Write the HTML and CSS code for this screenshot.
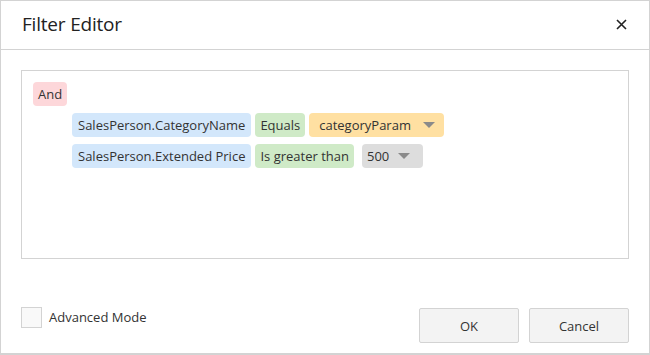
FILE: index.html
```html
<!DOCTYPE html>
<html>
<head>
<meta charset="utf-8">
<link rel="stylesheet" href="styles.css">
</head>
<body>
<div class="dialog">
  <div class="header">
    <span class="title">Filter Editor</span>
    <span class="close">
      <svg width="11" height="11" viewBox="0 0 11 11"><path d="M1 1 L10 10 M10 1 L1 10" stroke="#222" stroke-width="1.6" fill="none"/></svg>
    </span>
  </div>
  <div class="content">
    <div class="panel">
      <div class="group-row"><span class="chip chip-and">And</span></div>
      <div class="cond-row">
        <span class="chip chip-field">SalesPerson.CategoryName</span>
        <span class="chip chip-op">Equals</span>
        <span class="chip chip-param">categoryParam<span class="caret"></span></span>
      </div>
      <div class="cond-row">
        <span class="chip chip-field">SalesPerson.Extended Price</span>
        <span class="chip chip-op">Is greater than</span>
        <span class="chip chip-value">500<span class="caret"></span></span>
      </div>
    </div>
  </div>
  <div class="footer">
    <label class="check"><span class="box"></span><span class="check-label">Advanced Mode</span></label>
    <div class="buttons">
      <button class="btn">OK</button>
      <button class="btn">Cancel</button>
    </div>
  </div>
</div>
</body>
</html>
```

FILE: styles.css
```css
html, body {
  margin: 0;
  padding: 0;
  background: #fff;
}
body {
  font-family: "Open Sans", "Noto Sans", sans-serif;
  color: #333;
}
.dialog {
  width: 650px;
  height: 355px;
  box-sizing: border-box;
  border: 1px solid #d3d3d3;
  border-bottom-width: 2px;
  display: flex;
  flex-direction: column;
}
.header {
  height: 48px;
  border-bottom: 1px solid #d3d3d3;
  display: flex;
  align-items: center;
  justify-content: space-between;
  padding: 0 21px 0 21px;
}
.title {
  font-size: 19px;
  color: #222;
  letter-spacing: -0.2px;
  margin-top: -2px;
}
.close {
  display: flex;
  margin-top: -1px;
  margin-right: 1px;
}
.content {
  padding: 20px 20px 0;
}
.panel {
  height: 189px;
  box-sizing: border-box;
  border: 1px solid #d3d3d3;
  padding: 11px 11px;
  display: flex;
  flex-direction: column;
  gap: 7px;
}
.group-row, .cond-row {
  display: flex;
  gap: 4px;
}
.cond-row {
  padding-left: 39px;
}
.chip {
  height: 24px;
  box-sizing: border-box;
  padding: 0 5px;
  border-radius: 4px;
  font-size: 13px;
  line-height: 24px;
  color: #333;
  display: inline-flex;
  align-items: center;
  white-space: nowrap;
}
.chip-and { background: #fdd7da; }
.chip-field { background: #d3e7fb; padding: 0 6px; }
.chip-op { background: #cfeac7; }
.chip-param { background: #ffe0a2; margin-left: 0; padding: 0 9px 0 10px; }
.chip-value { background: #dddddd; margin-left: 4px; padding: 0 13px 0 5px; }
.caret {
  width: 0;
  height: 0;
  border-left: 6px solid transparent;
  border-right: 6px solid transparent;
  border-top: 6px solid #8a8a8a;
  margin-left: 12px;
}
.chip-value .caret { margin-left: 9px; }
.footer {
  margin-top: 48px;
  padding: 0 20px 0 20px;
  display: flex;
  justify-content: space-between;
  align-items: flex-start;
}
.check {
  display: flex;
  align-items: flex-start;
  gap: 7px;
}
.box {
  width: 21px;
  height: 21px;
  box-sizing: border-box;
  border: 1px solid #d3d3d3;
  background: #f9f9f9;
}
.check-label {
  font-size: 13px;
  color: #333;
  line-height: 20px;
}
.buttons {
  display: flex;
  gap: 10px;
  margin-top: 1px;
}
.btn {
  width: 100px;
  height: 35px;
  box-sizing: border-box;
  border: 1px solid #d3d3d3;
  border-radius: 2px;
  background: #f3f3f3;
  font-family: "Open Sans", "Noto Sans", sans-serif;
  font-size: 13px;
  color: #333;
  padding: 0;
}
```
